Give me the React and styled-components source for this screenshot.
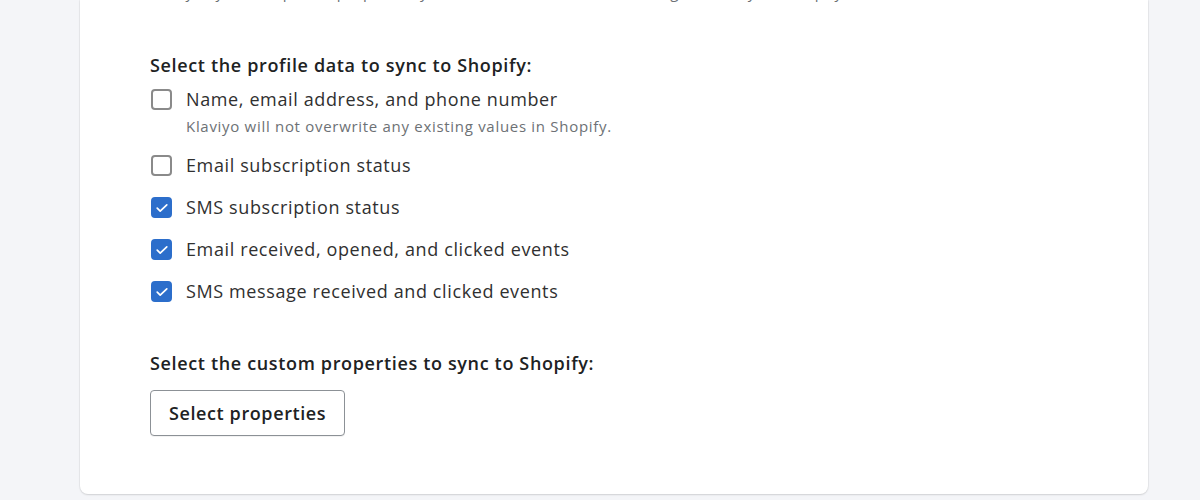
import styled, { createGlobalStyle } from "styled-components";

const GlobalStyle = createGlobalStyle`
  html, body {
    margin: 0;
    padding: 0;
    background: #f4f5f8;
    font-family: "Open Sans", "Noto Sans", sans-serif;
    color: #303030;
  }
`;

const profileOptions = [
  {
    label: "Name, email address, and phone number",
    help: "Klaviyo will not overwrite any existing values in Shopify.",
    checked: false,
  },
  { label: "Email subscription status", checked: false },
  { label: "SMS subscription status", checked: true },
  { label: "Email received, opened, and clicked events", checked: true },
  { label: "SMS message received and clicked events", checked: true },
];

function CheckIcon() {
  return (
    <svg width="16" height="16" viewBox="0 0 16 16" fill="none">
      <path
        d="M3.2 8.2l3 3L12.8 4.8"
        stroke="#fff"
        strokeWidth="1.7"
        strokeLinecap="round"
        strokeLinejoin="round"
      />
    </svg>
  );
}

function App() {
  return (
    <>
      <GlobalStyle />
      <Page>
        <Card>
          <Intro>
            Klaviyo syncs the profile properties you choose below to the matching
            fields in your Shopify.
          </Intro>
          <Section>
            <Heading>Select the profile data to sync to Shopify:</Heading>
            <OptionList>
              {profileOptions.map((opt) => (
                <Option key={opt.label}>
                  <Box checked={opt.checked}>{opt.checked && <CheckIcon />}</Box>
                  <OptionText>
                    <Label>{opt.label}</Label>
                    {opt.help && <Help>{opt.help}</Help>}
                  </OptionText>
                </Option>
              ))}
            </OptionList>
          </Section>
          <Section>
            <Heading>Select the custom properties to sync to Shopify:</Heading>
            <Button>Select properties</Button>
          </Section>
        </Card>
      </Page>
    </>
  );
}

const Page = styled.div`
  width: 1200px;
  height: 500px;
  box-sizing: border-box;
  padding: 0 52px 6px 80px;
  overflow: hidden;
`;

const Card = styled.div`
  height: 100%;
  box-sizing: border-box;
  background: #fff;
  border-radius: 0 0 8px 8px;
  box-shadow: 0 1px 2px rgba(0, 0, 0, 0.12), 0 0 0 1px rgba(0, 0, 0, 0.03);
  padding: 0 70px;
  display: flex;
  flex-direction: column;
`;

const Intro = styled.p`
  margin: -19px 0 0;
  font-size: 15px;
  line-height: 22px;
  letter-spacing: 0.6px;
  color: #6d7175;
  white-space: nowrap;
`;

const Section = styled.div`
  display: flex;
  flex-direction: column;
  align-items: flex-start;
  margin-top: 47px;
  &:first-of-type {
    margin-top: 50px;
  }
`;

const Heading = styled.h3`
  margin: 0;
  font-size: 18px;
  line-height: 24px;
  font-weight: 600;
  letter-spacing: 0.65px;
  color: #202223;
`;

const OptionList = styled.div`
  display: flex;
  flex-direction: column;
  gap: 16px;
  margin-top: 9px;
`;

const Option = styled.label`
  display: flex;
  align-items: flex-start;
  gap: 15px;
`;

const Box = styled.span`
  width: 21px;
  height: 21px;
  box-sizing: border-box;
  margin: 3px 0 0 1px;
  border-radius: 4px;
  border: 2px solid ${(p) => (p.checked ? "#2c6ecb" : "#8a8a8a")};
  background: ${(p) => (p.checked ? "#2c6ecb" : "#fff")};
  display: flex;
  align-items: center;
  justify-content: center;
  flex-shrink: 0;
`;

const OptionText = styled.div`
  display: flex;
  flex-direction: column;
`;

const Label = styled.span`
  margin-left: -1px;
  font-size: 18px;
  line-height: 26px;
  letter-spacing: 0.62px;
  color: #303030;
`;

const Help = styled.span`
  margin-top: 4px;
  margin-left: -1px;
  font-size: 15px;
  line-height: 20px;
  letter-spacing: 0.7px;
  color: #6d7175;
`;

const Button = styled.button`
  margin-top: 15px;
  height: 46px;
  padding: 0 18px;
  background: #fff;
  border: 1px solid #8c9196;
  border-radius: 4px;
  font-family: inherit;
  font-size: 18px;
  font-weight: 600;
  letter-spacing: 0.6px;
  color: #202223;
  box-shadow: 0 1px 0 rgba(0, 0, 0, 0.05);
`;

export default App;
